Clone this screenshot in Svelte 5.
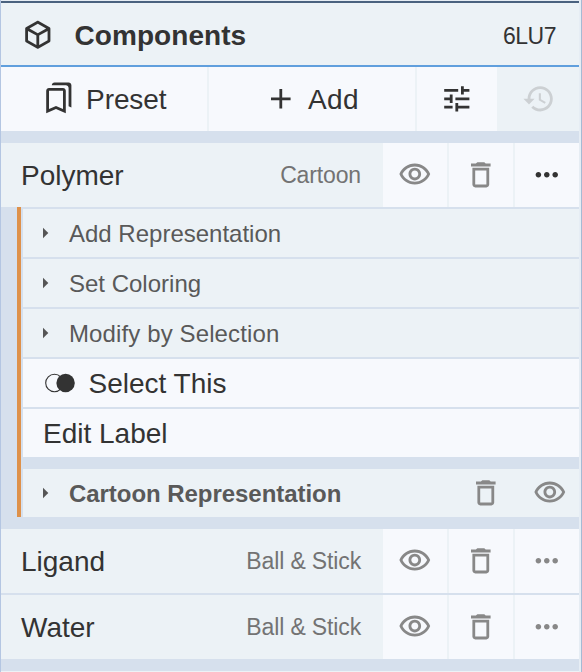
<script>
  const icons = {
    cube: 'M21,16.5C21,16.88 20.79,17.21 20.47,17.38L12.57,21.82C12.41,21.94 12.21,22 12,22C11.79,22 11.59,21.94 11.43,21.82L3.53,17.38C3.21,17.21 3,16.88 3,16.5V7.5C3,7.12 3.21,6.79 3.53,6.62L11.43,2.18C11.59,2.06 11.79,2 12,2C12.21,2 12.41,2.06 12.57,2.18L20.47,6.62C20.79,6.79 21,7.12 21,7.5V16.5M12,4.15L6.04,7.5L12,10.85L17.96,7.5L12,4.15M5,15.91L11,19.29V12.58L5,9.21V15.91M19,15.91V9.21L13,12.58V19.29L19,15.91Z',
    bookmarks: 'M15 7v12.97l-4.21-1.81-.79-.34-.79.34L5 19.97V7h10m4-6H8.99C7.89 1 7 1.9 7 3h10c1.1 0 2 .9 2 2v13l2 1V3c0-1.1-.9-2-2-2zm-4 4H5c-1.1 0-2 .9-2 2v16l7-3 7 3V7c0-1.1-.9-2-2-2z',
    add: 'M19 13h-6v6h-2v-6H5v-2h6V5h2v6h6v2z',
    tune: 'M3 17v2h6v-2H3zM3 5v2h10V5H3zm10 16v-2h8v-2h-8v-2h-2v6h2zM7 9v2H3v2h4v2h2V9H7zm14 4v-2H11v2h10zm-6-4h2V7h4V5h-4V3h-2v6z',
    history: 'M13 3c-4.97 0-9 4.03-9 9H1l3.89 3.89.07.14L9 12H6c0-3.87 3.13-7 7-7s7 3.13 7 7-3.13 7-7 7c-1.93 0-3.68-.79-4.94-2.06l-1.42 1.42C8.27 19.99 10.51 21 13 21c4.97 0 9-4.03 9-9s-4.03-9-9-9zm-1 5v5l4.28 2.54.72-1.21-3.5-2.08V8H12z',
    eye: 'M12 6c3.79 0 7.17 2.13 8.82 5.5C19.17 14.87 15.79 17 12 17s-7.17-2.13-8.82-5.5C4.83 8.13 8.21 6 12 6m0-2C7 4 2.73 7.11 1 11.5 2.73 15.89 7 19 12 19s9.27-3.11 11-7.5C21.27 7.11 17 4 12 4zm0 5c1.38 0 2.5 1.12 2.5 2.5S13.38 14 12 14s-2.5-1.12-2.5-2.5S10.62 9 12 9m0-2c-2.48 0-4.5 2.02-4.5 4.5S9.52 16 12 16s4.5-2.02 4.5-4.5S14.48 7 12 7z',
    trash: 'M6 19c0 1.1.9 2 2 2h8c1.1 0 2-.9 2-2V7H6v12zM8 9h8v10H8V9zm7.5-5l-1-1h-5l-1 1H5v2h14V4z',
    more: 'M6 10c-1.1 0-2 .9-2 2s.9 2 2 2 2-.9 2-2-.9-2-2-2zm12 0c-1.1 0-2 .9-2 2s.9 2 2 2 2-.9 2-2-.9-2-2-2zm-6 0c-1.1 0-2 .9-2 2s.9 2 2 2 2-.9 2-2-.9-2-2-2z',
  };
  const groups = ['Add Representation', 'Set Coloring', 'Modify by Selection'];
</script>

{#snippet icon(name)}
  <svg class="icon" viewBox="0 0 24 24" aria-hidden="true"><path d={icons[name]} /></svg>
{/snippet}

{#snippet arrow()}
  <svg class="arrow" viewBox="0 0 6 12" aria-hidden="true"><path d="M0 0.7L5.3 6L0 11.3Z" /></svg>
{/snippet}

{#snippet component(name, repr, open)}
  <div class="component">
    <div class="label">
      <span class="name">{name}</span>
      <span class="repr">{repr}</span>
    </div>
    <button class="action" aria-label="Toggle visibility">{@render icon('eye')}</button>
    <button class="action" aria-label="Remove">{@render icon('trash')}</button>
    <button class="action" class:open aria-label="More">{@render icon('more')}</button>
  </div>
{/snippet}

<main class="panel">
  <header>
    {@render icon('cube')}
    <h1>Components</h1>
    <span class="entry">6LU7</span>
  </header>

  <div class="toolbar">
    <button class="wide preset">{@render icon('bookmarks')}<span>Preset</span></button>
    <button class="wide add">{@render icon('add')}<span>Add</span></button>
    <button class="tune" aria-label="Options">{@render icon('tune')}</button>
    <button class="history" disabled aria-label="Undo">{@render icon('history')}</button>
  </div>

  {@render component('Polymer', 'Cartoon', true)}
  <section class="details">
    {#each groups as group}
      <div class="group">{@render arrow()}<span>{group}</span></div>
    {/each}
    <button class="row">
      <svg class="union" viewBox="0 0 30 20" aria-hidden="true">
        <circle cx="9.5" cy="10" r="8.8" />
        <circle class="solid" cx="20.6" cy="10" r="9.2" />
      </svg>
      <span class="select">Select This</span>
    </button>
    <button class="row"><span class="edit">Edit Label</span></button>
    <div class="group representation">
      {@render arrow()}<strong>Cartoon Representation</strong>
      <div class="tools">{@render icon('trash')}{@render icon('eye')}</div>
    </div>
  </section>

  {@render component('Ligand', 'Ball & Stick', false)}
  {@render component('Water', 'Ball & Stick', false)}
  <div class="next"></div>
</main>

<style>
  :global(body) {
    background: #d6e0ed;
  }
  .panel {
    box-sizing: border-box;
    width: 582px;
    height: 672px;
    overflow: hidden;
    padding-right: 2px;
    border-left: 1px solid #b4c6e2;
    border-right: 1px solid #a5bad4;
    background: linear-gradient(to left, #e6edf4 2px, #d6e0ed 2px);
    color: #333;
    font-family: 'Liberation Sans', Arial, sans-serif;
    font-size: 28px;
  }
  button {
    box-sizing: border-box;
    margin: 0;
    padding: 0;
    border: 0;
    border-radius: 0;
    background: #f7f9fd;
    color: #333;
    font: inherit;
    display: flex;
    align-items: center;
  }
  button span,
  .name,
  .group span,
  .group strong {
    padding-top: 2px;
  }
  .icon {
    display: block;
    flex: none;
    width: 33.6px;
    height: 33.6px;
    fill: currentColor;
  }
  header {
    box-sizing: border-box;
    height: 67px;
    padding: 3px 23px 0 20px;
    display: flex;
    align-items: center;
    border-bottom: 2px solid #609fdd;
    background: linear-gradient(#e6edf4 1px, #4a627f 1px 3px, #ecf2f6 3px);
  }
  header .icon {
    margin-top: 2px;
  }
  h1 {
    flex: 1;
    margin: 3px 0 0 20px;
    font-size: 28px;
    line-height: 32px;
    letter-spacing: 0.05px;
  }
  .entry {
    font-size: 23px;
    letter-spacing: -0.5px;
    margin-top: 4px;
  }
  .toolbar {
    height: 64px;
    display: flex;
    gap: 2px;
    margin-bottom: 12px;
    background: #ecf2f6;
  }
  .wide {
    width: 206px;
  }
  .preset {
    padding-left: 40.5px;
    gap: 11px;
    letter-spacing: -0.1px;
  }
  .preset .icon {
    margin-bottom: 2px;
  }
  .add {
    padding-left: 55px;
    gap: 10.5px;
    letter-spacing: 0.3px;
  }
  .tune {
    width: 80px;
    justify-content: center;
  }
  .history {
    flex: 1;
    padding-left: 22.5px;
    background: #ecf2f6;
    color: #ccd0d3;
  }
  .component {
    height: 64px;
    display: flex;
    gap: 2px;
    margin-bottom: 2px;
    background: #ecf2f6;
  }
  .label {
    flex: 1;
    padding: 0 20px;
    display: flex;
    align-items: center;
    justify-content: space-between;
  }
  .repr {
    font-size: 23px;
    color: #737373;
    letter-spacing: -0.14px;
  }
  .action {
    width: 64px;
    justify-content: center;
    color: #888;
  }
  .action.open {
    color: #333;
  }
  .details {
    margin: -2px 0 12px 16px;
    padding: 2px 0 0 2px;
    border-left: 4px solid #de914a;
    display: flex;
    flex-direction: column;
    gap: 2px;
  }
  .group {
    box-sizing: border-box;
    height: 48px;
    padding: 0 12px 0 19.5px;
    display: flex;
    align-items: center;
    background: #ecf2f6;
    color: #595959;
    font-size: 24px;
  }
  .group:nth-child(3) span {
    letter-spacing: 0.12px;
  }
  .arrow {
    width: 6px;
    height: 12px;
    margin-right: 20.5px;
    fill: #555;
  }
  .row {
    height: 48px;
    padding-left: 20px;
  }
  .union {
    width: 30px;
    height: 20px;
    margin: 0 14px 0 1.5px;
    fill: none;
    stroke: #333;
    stroke-width: 1.1;
  }
  .solid {
    fill: #333;
    stroke: none;
  }
  .representation {
    margin-top: 10px;
  }
  .representation strong {
    letter-spacing: -0.05px;
  }
  .tools {
    margin-left: auto;
    display: flex;
    gap: 31px;
    color: #888;
  }
  .next {
    height: 2px;
    margin-top: 12px;
    background: #ecf2f6;
  }
</style>
